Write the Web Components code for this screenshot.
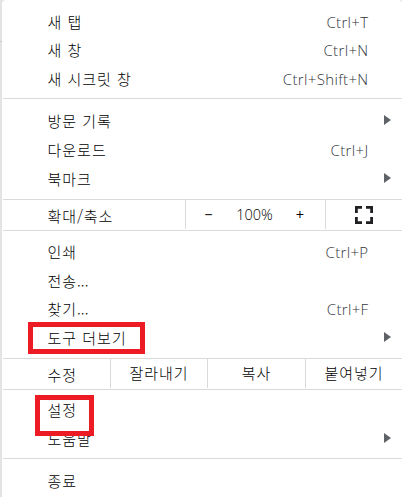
<!DOCTYPE html>
<html lang="ko">
<head>
<meta charset="utf-8">
<title>메뉴</title>
<style>
html, body { margin: 0; height: 497px; overflow: hidden; background: #e3e3e3; }
</style>
</head>
<body>
<browser-menu>
  <menu-section style="--h:98px;--top:7.3px">
    <menu-row label="새 탭" keys="Ctrl+T"></menu-row>
    <menu-row label="새 창" keys="Ctrl+N"></menu-row>
    <menu-row label="새 시크릿 창" keys="Ctrl+Shift+N"></menu-row>
  </menu-section>
  <menu-section style="--h:100px;--top:8px">
    <menu-row label="방문 기록" submenu></menu-row>
    <menu-row label="다운로드" keys="Ctrl+J"></menu-row>
    <menu-row label="북마크" submenu></menu-row>
  </menu-section>
  <menu-strip label="확대/축소" style="--label:182px;--shift:1px">
    <zoom-controls></zoom-controls>
    <fullscreen-button></fullscreen-button>
  </menu-strip>
  <menu-section style="--h:127px;--top:6.6px">
    <menu-row label="인쇄" keys="Ctrl+P"></menu-row>
    <menu-row label="전송" dots></menu-row>
    <menu-row label="찾기" dots keys="Ctrl+F"></menu-row>
    <menu-row label="도구 더보기" submenu></menu-row>
  </menu-section>
  <menu-strip label="수정" style="--label:107px;--shift:1px">
    <strip-button style="width:96px">잘라내기</strip-button>
    <strip-button style="width:97px">복사</strip-button>
    <strip-button style="flex:1">붙여넣기</strip-button>
  </menu-strip>
  <menu-section style="--h:68px;--top:6px">
    <menu-row label="설정"></menu-row>
    <menu-row label="도움말" submenu></menu-row>
  </menu-section>
  <menu-section last style="--h:38px;--top:8px">
    <menu-row label="종료"></menu-row>
  </menu-section>
  <highlight-box slot="marks" style="left:28px;top:322px;width:117px;height:32px"></highlight-box>
  <highlight-box slot="marks" style="left:35px;top:395px;width:59px;height:41px"></highlight-box>
</browser-menu>
<script>
function define(name, html, setup) {
  const template = document.createElement('template');
  template.innerHTML = html;
  customElements.define(name, class extends HTMLElement {
    constructor() {
      super();
      this.attachShadow({ mode: 'open' }).append(template.content.cloneNode(true));
    }
    connectedCallback() { if (setup) setup(this, this.shadowRoot); }
  });
}

define('browser-menu', `<style>
:host { display: block; position: relative; box-sizing: border-box; width: 402px; height: 497px; padding-left: 2px;
  background: linear-gradient(#c9c9c9, #c9c9c9) 0 41px / 2px 1px no-repeat, #e3e3e3;
  font: 15px/20px "Noto Sans", "Noto Sans CJK KR", sans-serif; color: #000; }
.panel { display: flex; flex-direction: column; height: 497px; padding-left: 1px; box-sizing: border-box; background: #fff; border-radius: 4px 4px 0 0; overflow: hidden; }
</style><div class="panel"><slot></slot></div><slot name="marks"></slot>`);

define('menu-section', `<style>
:host { display: flex; flex-direction: column; flex: none; box-sizing: content-box; height: var(--h); border-bottom: 1px solid #dadada; }
:host([last]) { border-bottom: 0; }
.rows { padding-top: var(--top); }
</style><div class="rows"><slot></slot></div>`);

define('menu-row', `<style>
:host { display: flex; align-items: center; height: 28.67px; padding: 0 11px 0 44.5px; }
.label { flex: 1; white-space: pre; font-family: "Noto Sans CJK KR", sans-serif; font-weight: 300; letter-spacing: 1px; }
.dots { letter-spacing: 0; }
.keys { color: #33373c; font-family: "Open Sans", sans-serif; font-weight: 300; font-size: 15px; letter-spacing: .35px; margin-right: 22.5px; }
svg { display: block; width: 7px; height: 10px; fill: #5f6368; position: relative; top: -1px; }
[hidden] { display: none; }
</style><span class="label"></span><span class="keys" hidden></span><svg viewBox="0 0 7 10" hidden><path d="M0 0L7 5L0 10Z"/></svg>`, (host, root) => {
  const label = root.querySelector('.label');
  label.textContent = host.getAttribute('label');
  if (host.hasAttribute('dots')) {
    const dots = document.createElement('span');
    dots.className = 'dots';
    dots.textContent = '...';
    label.append(dots);
  }
  const keys = root.querySelector('.keys');
  keys.textContent = host.getAttribute('keys') || '';
  if (host.hasAttribute('keys')) keys.removeAttribute('hidden');
  if (host.hasAttribute('submenu')) root.querySelector('svg').removeAttribute('hidden');
});

define('menu-strip', `<style>
:host { display: flex; flex: none; height: 30px; border-bottom: 1px solid #dadada; }
.label { box-sizing: border-box; width: var(--label); padding: var(--shift) 0 0 44.5px; line-height: 30px; white-space: pre;
  font-family: "Noto Sans CJK KR", sans-serif; font-weight: 300; letter-spacing: .9px; }
</style><span class="label"></span><slot></slot>`, (host, root) => {
  root.querySelector('.label').textContent = host.getAttribute('label');
});

define('strip-button', `<style>
:host { display: block; height: 29px; border-left: 1px solid #dadada; text-align: center; line-height: 28px;
  font-family: "Noto Sans CJK KR", sans-serif; font-weight: 300; letter-spacing: .9px; }
</style><slot></slot>`);

define('zoom-controls', `<style>
:host { display: grid; grid-template-columns: 45px 47px 44px 3px; height: 29px; border-left: 1px solid #dadada; text-align: center; line-height: 30px;
  font-family: "Open Sans", sans-serif; font-size: 14.5px; }
.value { font-weight: 300; }
</style><span>−</span><span class="value">100%</span><span>+</span>`);

define('fullscreen-button', `<style>
:host { display: flex; align-items: center; justify-content: center; flex: 1; height: 29px; border-left: 1px solid #dadada; }
svg { width: 18px; height: 18px; margin-right: 1px; fill: none; stroke: #202124; stroke-width: 2.8; }
</style><svg viewBox="0 0 18 18"><path d="M1.4 7V1.4H7M11 1.4H16.6V7M16.6 11V16.6H11M7 16.6H1.4V11"/></svg>`);

define('highlight-box', `<style>
:host { display: block; position: absolute; box-sizing: border-box; border: 5px solid #ed1c24; }
</style>`);
</script>
</body>
</html>
